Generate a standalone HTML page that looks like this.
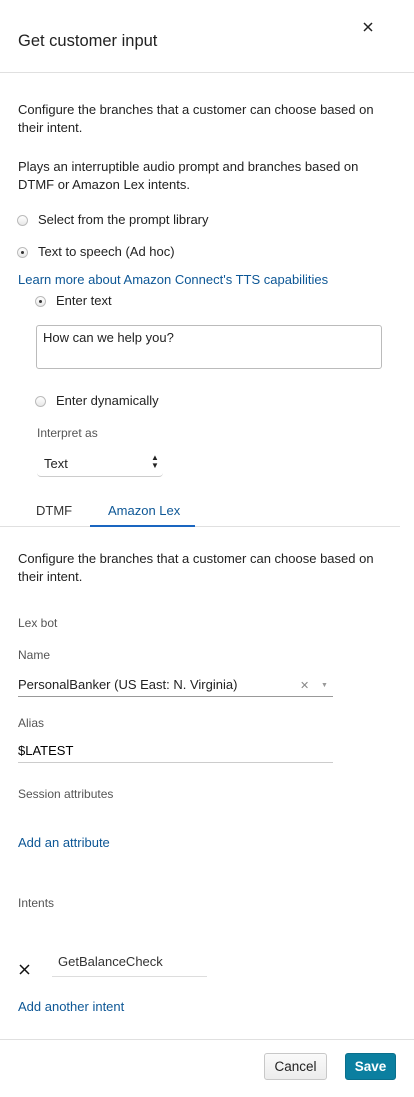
<!DOCTYPE html>
<html><head><meta charset="utf-8"><style>
*{box-sizing:border-box;margin:0;padding:0}
body{width:414px;height:1097px;background:#fff;font-family:"Liberation Sans",sans-serif;color:#222;font-size:13px;position:relative;overflow:hidden}
.a{position:absolute;line-height:18px;white-space:nowrap}
.l{color:#0d5796}
.g{color:#555;font-size:12px}
.hr{position:absolute;left:0;width:414px;height:1px;background:#e0e0e0}
.r{position:absolute;width:11px;height:11px;border-radius:50%;border:1px solid #bbb;background:linear-gradient(#fff,#e8e8e8)}
.r.on::after{content:"";position:absolute;left:3px;top:3px;width:3px;height:3px;border-radius:50%;background:#333}
.line{position:absolute;height:1px;background:#ccc}
</style></head><body>
<div class="a" style="left:18px;top:31px;font-size:16.5px;line-height:20px">Get customer input</div>
<svg style="position:absolute;left:363px;top:22px" width="10" height="10"><path d="M1 1L9 9M9 1L1 9" stroke="#222" stroke-width="1.5"/></svg>
<div class="hr" style="top:72px"></div>
<div class="a" style="left:18px;top:101px">Configure the branches that a customer can choose based on</div>
<div class="a" style="left:18px;top:119px">their intent.</div>
<div class="a" style="left:18px;top:158px">Plays an interruptible audio prompt and branches based on</div>
<div class="a" style="left:18px;top:176px">DTMF or Amazon Lex intents.</div>
<div class="r" style="left:17px;top:215px"></div><div class="a" style="left:38px;top:211px">Select from the prompt library</div>
<div class="r on" style="left:17px;top:247px"></div><div class="a" style="left:38px;top:243px">Text to speech (Ad hoc)</div>
<div class="a l" style="left:18px;top:271px">Learn more about Amazon Connect's TTS capabilities</div>
<div class="r on" style="left:35px;top:296px"></div><div class="a" style="left:56px;top:292px">Enter text</div>
<div style="position:absolute;left:36px;top:325px;width:346px;height:44px;border:1px solid #bbb;border-radius:3px"></div>
<div class="a" style="left:43px;top:329px;font-size:13px">How can we help you?</div>
<div class="r" style="left:35px;top:396px"></div><div class="a" style="left:56px;top:392px">Enter dynamically</div>
<div class="a g" style="left:37px;top:424px">Interpret as</div>
<div style="position:absolute;left:37px;top:453px;width:126px;height:24px;border-bottom:1px solid #ccc;border-radius:0 0 4px 4px"></div>
<div class="a" style="left:44px;top:455px;font-size:13px">Text</div>
<div class="a" style="left:151px;top:454px;font-size:8px;line-height:8px">▲<br>▼</div>
<div class="a" style="left:36px;top:502px;font-size:13px;color:#333">DTMF</div>
<div class="a l" style="left:108px;top:502px;font-size:13px">Amazon Lex</div>
<div class="hr" style="top:526px;width:400px"></div>
<div style="position:absolute;left:90px;top:525px;width:105px;height:2px;background:#1a66c0"></div>
<div class="a" style="left:18px;top:550px">Configure the branches that a customer can choose based on</div>
<div class="a" style="left:18px;top:568px">their intent.</div>
<div class="a g" style="left:18px;top:614px">Lex bot</div>
<div class="a g" style="left:18px;top:646px">Name</div>
<div class="a" style="left:18px;top:676px">PersonalBanker (US East: N. Virginia)</div>
<div class="a" style="left:300px;top:677px;color:#888;font-size:11px">✕</div>
<div class="a" style="left:321px;top:677px;color:#999;font-size:7px">▼</div>
<div class="line" style="left:18px;top:696px;width:315px;background:#999"></div>
<div class="a g" style="left:18px;top:714px">Alias</div>
<div class="a" style="left:18px;top:742px;color:#000">$LATEST</div>
<div class="line" style="left:18px;top:762px;width:315px"></div>
<div class="a g" style="left:18px;top:785px">Session attributes</div>
<div class="a l" style="left:18px;top:834px">Add an attribute</div>
<div class="a g" style="left:18px;top:894px">Intents</div>
<svg style="position:absolute;left:19px;top:964px" width="11" height="11"><path d="M1 1L10 10M10 1L1 10" stroke="#111" stroke-width="1.5"/></svg>
<div class="a" style="left:58px;top:953px;font-size:13px;color:#333">GetBalanceCheck</div>
<div class="line" style="left:52px;top:976px;width:155px;background:#ddd"></div>
<div class="a l" style="left:18px;top:998px">Add another intent</div>
<div class="hr" style="top:1039px"></div>
<div style="position:absolute;left:264px;top:1053px;width:63px;height:27px;border:1px solid #c8c8c8;border-radius:3px;background:linear-gradient(#fafafa,#ececec);text-align:center;line-height:25px;font-size:13.5px;color:#222">Cancel</div>
<div style="position:absolute;left:345px;top:1053px;width:51px;height:27px;border-radius:3px;background:#0b7fa0;border:1px solid #0a6f8c;text-align:center;line-height:25px;font-size:13.5px;color:#fff;font-weight:bold">Save</div>
</body></html>
